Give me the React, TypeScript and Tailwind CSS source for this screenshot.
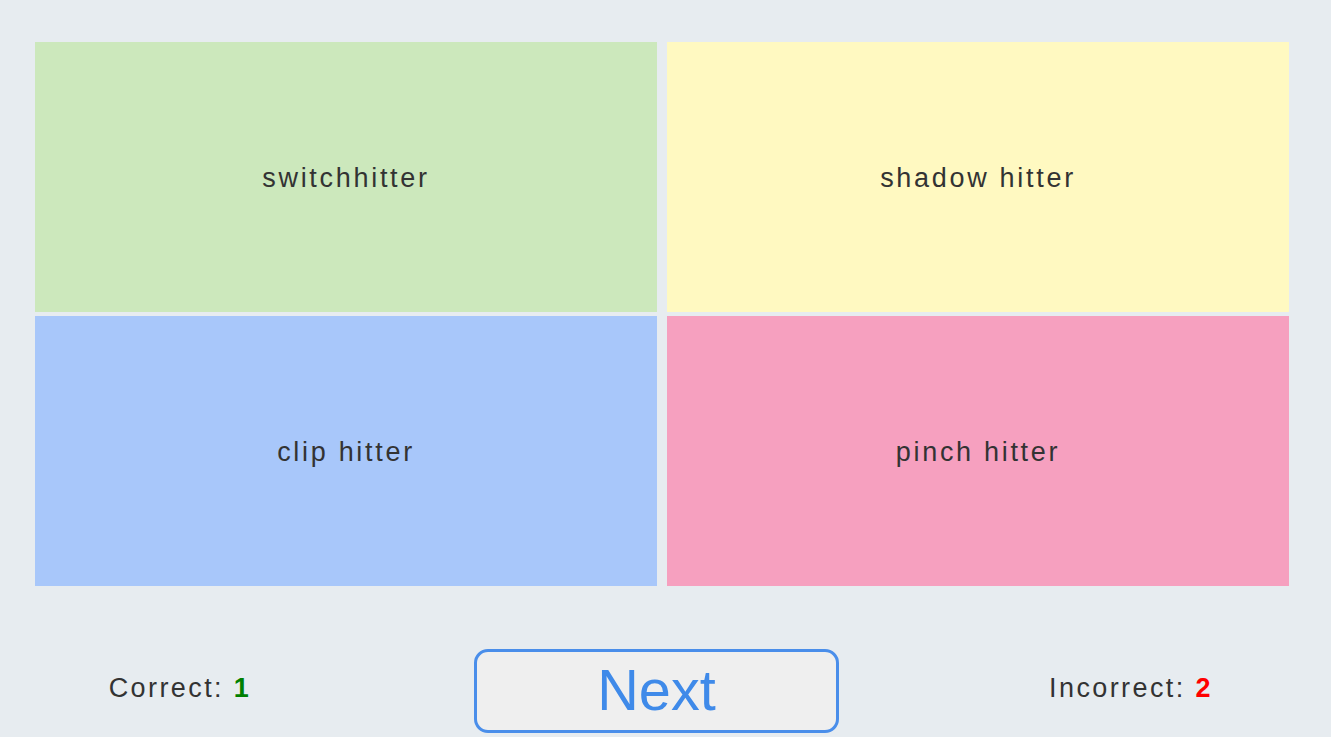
import React from "react";

const tiles = [
  { label: "switchhitter", cls: "bg-[#cce8bc]" },
  { label: "shadow hitter", cls: "bg-[#fff9c1]" },
  { label: "clip hitter", cls: "bg-[#a8c7fa]" },
  { label: "pinch hitter", cls: "bg-[#f6a0bf]" },
];

export default function App() {
  return (
    <div
      className="w-full h-[737px] overflow-hidden bg-[#e7ecf0] text-[#333333]"
      style={{ fontFamily: '"Liberation Sans", Arial, sans-serif' }}
    >
      <div className="pt-[42px] pl-[35px]">
        <div className="grid w-[1254px] grid-cols-2 gap-x-[10px] gap-y-[4px]">
          {tiles.map((t) => (
            <div
              key={t.label}
              className={`${t.cls} flex h-[270px] items-center justify-center`}
            >
              <span className="pt-[2px] text-[27px] tracking-[0.1em] leading-none">{t.label}</span>
            </div>
          ))}
        </div>
      </div>
      <div className="mt-[63px] flex items-center">
        <div className="mb-[5px] flex w-[360px] justify-center text-[27px] tracking-[2.4px] leading-none">
          <span>
            Correct: <span className="font-bold text-[#008000]">1</span>
          </span>
        </div>
        <button className="ml-[114px] flex h-[84px] w-[365px] items-center justify-center rounded-[14px] border-[3px] border-[#4a8eea] bg-[#efefef] text-[57.6px] leading-none text-[#3f8ae9]">
          Next
        </button>
        <div className="mb-[5px] ml-[114px] flex w-[356px] justify-center text-[27px] tracking-[2.4px] leading-none">
          <span>
            Incorrect: <span className="font-bold text-[#ff0000]">2</span>
          </span>
        </div>
      </div>
    </div>
  );
}
